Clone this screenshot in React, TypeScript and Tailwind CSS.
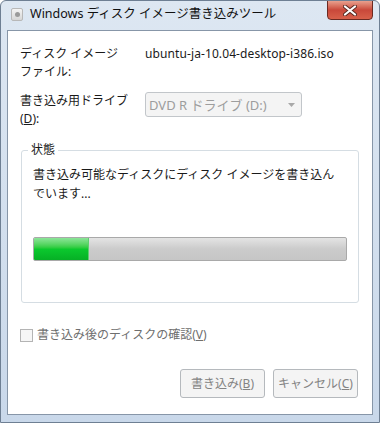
import React from "react";

const font = { fontFamily: '"Noto Sans", "Noto Sans CJK JP", sans-serif' };

export default function App() {
  return (
    <div
      className="w-[380px] h-[423px] flex flex-col bg-gradient-to-b from-[#dde7f2] to-[#c9d8ea] border border-[#6e7f93] rounded-t-[6px] overflow-hidden text-[12px] text-[#1a1a1a]"
      style={font}
    >
      {/* Title bar */}
      <div className="h-[29px] flex items-start relative shrink-0">
        <div className="mt-[7px] ml-[10px] w-[12px] h-[13px] rounded-[2px] bg-gradient-to-b from-[#f4f4f4] to-[#d6d6d6] border border-[#b8b8b8] flex items-center justify-center">
          <div className="w-[5px] h-[5px] rounded-full bg-[#9a9a9a]" />
        </div>
        <div className="ml-[7px] mt-[4px] text-[12.5px] leading-[18px] text-[#111]">
          Windows ディスク イメージ書き込みツール
        </div>
        <div className="absolute right-[6px] top-[-1px] w-[46px] h-[20px] rounded-b-[4px] border border-[#6b2a22] bg-gradient-to-b from-[#e8a08e] via-[#c9483a] to-[#d8604a] flex items-center justify-center">
          <svg width="14" height="11" viewBox="0 0 14 11">
            <path d="M2 1.5 L12 9.5 M12 1.5 L2 9.5" stroke="#5a2a22" strokeWidth="4" strokeLinecap="round" />
            <path d="M2 1.5 L12 9.5 M12 1.5 L2 9.5" stroke="#ffffff" strokeWidth="2.2" strokeLinecap="round" />
          </svg>
        </div>
      </div>

      {/* Client area */}
      <div className="mx-[6px] mb-[7px] flex-1 bg-white border border-[#8796a8] flex flex-col">
        {/* Row 1 */}
        <div className="flex mt-[14px] pl-[12px] leading-[18px]">
          <div className="w-[125px]">
            ディスク イメージ
            <br />
            ファイル:
          </div>
          <div className="tracking-[0.1px]">ubuntu-ja-10.04-desktop-i386.iso</div>
        </div>

        {/* Row 2 */}
        <div className="flex mt-[11px] pl-[12px] leading-[18px]">
          <div className="w-[125px]">
            書き込み用ドライブ
            <br />
            (<span className="underline">D</span>):
          </div>
          <div className="w-[157px] h-[25px] border border-[#c2c6ca] rounded-[3px] bg-[#f4f4f4] flex items-center justify-between pl-[3px] pr-[6px] text-[#9d9d9d] text-[13px]">
            <span>DVD R ドライブ (D:)</span>
            <svg width="7" height="4" viewBox="0 0 7 4">
              <path d="M0 0 L7 0 L3.5 4 Z" fill="#a8a8a8" />
            </svg>
          </div>
        </div>

        {/* Group box */}
        <div className="relative mt-[22px] mx-[13px] h-[153px] border border-[#d5dde3] rounded-[3px] px-[11px]">
          <div className="absolute -top-[10px] left-[6px] bg-white px-[3px] leading-[18px]">状態</div>
          <div className="mt-[14px] leading-[19px]">
            書き込み可能なディスクにディスク イメージを書き込ん
            <br />
            でいます...
          </div>
          <div className="mt-[34px] h-[24px] border border-[#a9a9a9] rounded-[2px] bg-gradient-to-b from-[#e4e4e4] via-[#cbcbcb] to-[#c6c6c6] flex overflow-hidden">
            <div className="w-[55px] h-full bg-gradient-to-b from-[#8be598] via-[#0bc92e] to-[#06b025] border-r border-[#5fcf70]" />
          </div>
        </div>

        {/* Checkbox */}
        <div className="flex items-center mt-[23px] pl-[12px] leading-[18px] text-[#6e6e6e]">
          <div className="w-[13px] h-[13px] border border-[#b4b4b4] bg-[#f6f6f6]" />
          <span className="ml-[4px]">
            書き込み後のディスクの確認(<span className="underline">V</span>)
          </span>
        </div>

        {/* Buttons */}
        <div className="flex justify-end gap-[8px] mt-[25px] pr-[14px]">
          <div className="w-[85px] h-[29px] border border-[#b5b9bd] rounded-[3px] bg-[#f4f4f4] flex items-center justify-center text-[#838383]">
            書き込み(<span className="underline">B</span>)
          </div>
          <div className="w-[85px] h-[29px] border border-[#b5b9bd] rounded-[3px] bg-[#f4f4f4] flex items-center justify-center text-[#838383]">
            キャンセル(<span className="underline">C</span>)
          </div>
        </div>
      </div>
    </div>
  );
}
